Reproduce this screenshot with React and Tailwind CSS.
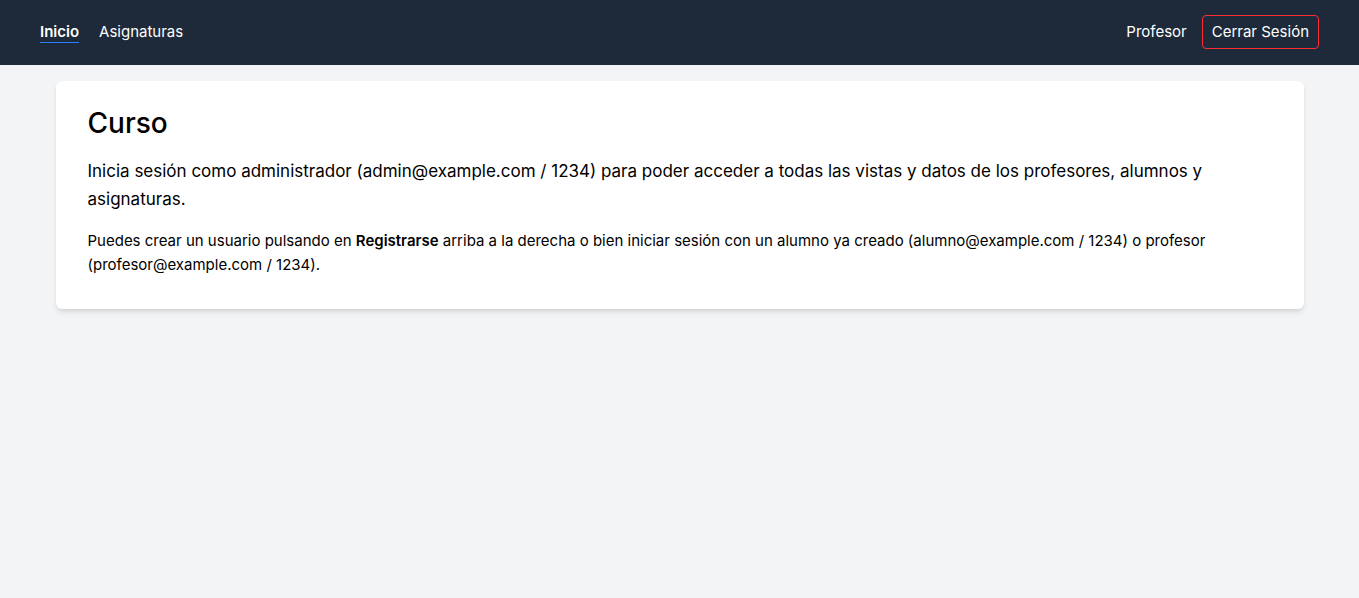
export default function App() {
  return (
    <div
      className="min-h-screen bg-gray-100 text-black"
      style={{ fontFamily: "Inter, 'Noto Sans', sans-serif" }}
    >
      <nav className="h-[65px] bg-gray-800 px-10 pb-px flex items-center justify-between text-white text-[15px]">
        <div className="flex items-center gap-5">
          <a className="font-semibold border-b border-blue-500 leading-5">Inicio</a>
          <a>Asignaturas</a>
        </div>
        <div className="flex items-center gap-[15px]">
          <span>Profesor</span>
          <button className="border border-red-500 rounded px-[9px] h-[34px]">
            Cerrar Sesión
          </button>
        </div>
      </nav>
      <main className="max-w-7xl mx-auto px-4 mt-4">
        <div className="bg-white rounded-md shadow-md px-8 pt-6 pb-8">
          <h1 className="text-[28px] font-medium leading-9">Curso</h1>
          <p className="mt-4 text-[17px] leading-7">
            Inicia sesión como administrador (admin@example.com / 1234) para
            poder acceder a todas las vistas y datos de los profesores, alumnos y
            asignaturas.
          </p>
          <p className="mt-4 text-[15px] leading-6">
            Puedes crear un usuario pulsando en{" "}
            <span className="font-semibold">Registrarse</span> arriba a la
            derecha o bien iniciar sesión con un alumno ya creado
            (alumno@example.com / 1234) o profesor (profesor@example.com / 1234).
          </p>
        </div>
      </main>
    </div>
  );
}
